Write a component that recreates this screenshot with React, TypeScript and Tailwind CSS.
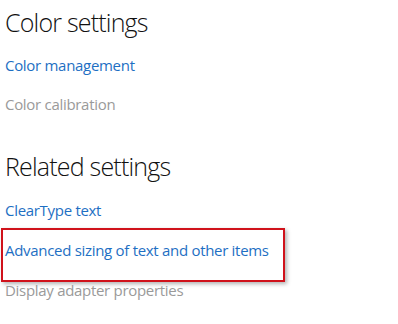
import React from 'react';

const font = { fontFamily: '"Open Sans", "Noto Sans", Arial, sans-serif' };

export default function App() {
  return (
    <div className="w-[398px] h-[324px] bg-white overflow-hidden pl-[5px]" style={font}>
      {/* Color settings */}
      <h2 className="mt-[5px] text-[25px] leading-[35px] font-light tracking-[-0.8px] text-[#111]">Color settings</h2>
      <div className="mt-[15px] text-[15px] leading-[20px] tracking-[-0.3px] text-[#1e6fc3]">Color management</div>
      <div className="mt-[19px] text-[15px] leading-[20px] tracking-[-0.3px] text-[#9a9a9a]">Color calibration</div>

      {/* Related settings */}
      <h2 className="mt-[35px] text-[25px] leading-[35px] font-light tracking-[-0.8px] text-[#111]">Related settings</h2>
      <div className="mt-[16px] text-[15px] leading-[20px] tracking-[-0.3px] text-[#1e6fc3]">ClearType text</div>
      <div className="mt-[8px] -ml-[4px] w-[284px] h-[54px] border-2 border-[#d0121b] pl-[2px] pt-[10px] shadow-[2px_2px_4px_rgba(0,0,0,0.3)]">
        <div className="text-[15px] leading-[20px] tracking-[-0.3px] text-[#1e6fc3]">Advanced sizing of text and other items</div>
      </div>
      <div className="text-[15px] leading-[16px] tracking-[-0.3px] text-[#9a9a9a]">Display adapter properties</div>
    </div>
  );
}
